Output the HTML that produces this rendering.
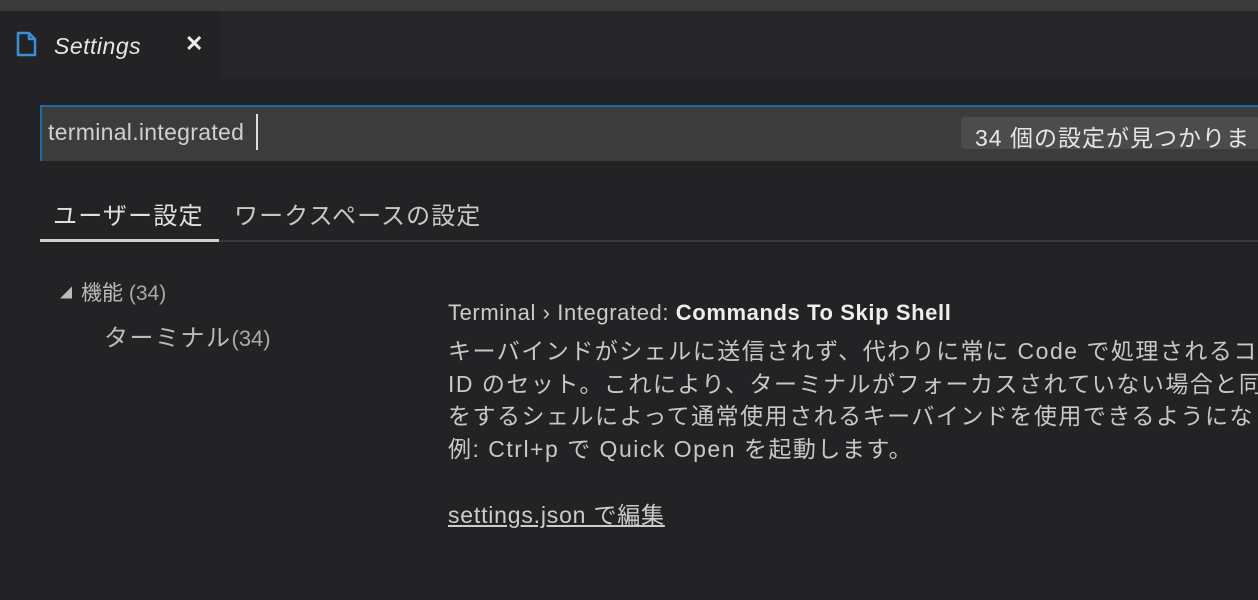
<!DOCTYPE html>
<html><head><meta charset="utf-8"><style>
body{margin:0;width:1258px;height:600px;overflow:hidden;background:#232225;font-family:"Liberation Sans","Noto Sans CJK JP",sans-serif;color:#ccc;position:relative}
.a{position:absolute;white-space:nowrap}
</style></head><body>
<div class="a" style="left:0;top:0;width:1258px;height:11px;background:#3a3a3b"></div>
<div class="a" style="left:0;top:11px;width:1258px;height:67px;background:#262628"></div>
<div class="a" style="left:0;top:11px;width:220px;height:67px;background:#232225"></div>
<svg class="a" style="left:16px;top:31px" width="22" height="26" viewBox="0 0 22 26"><path d="M2 2h11l6 6v16H2z M13 2v6h6" fill="none" stroke="#3b8fd6" stroke-width="2.5" stroke-linejoin="round"/></svg>
<div class="a" style="left:54px;top:33px;font-size:23px;font-style:italic;color:#e6e6e6;letter-spacing:0.5px">Settings</div>
<div class="a" style="left:185px;top:31px;font-size:22px;font-weight:bold;color:#eee">✕</div>
<div class="a" style="left:40px;top:105px;width:1218px;height:56px;background:#3c3c3c;border-top:2px solid #1f6aa5;box-sizing:border-box"></div>
<div class="a" style="left:40px;top:105px;width:2px;height:56px;background:#1f6aa5"></div>
<div class="a" style="left:48px;top:119px;font-size:23px;color:#d0d0d0;letter-spacing:0.3px">terminal.integrated</div>
<div class="a" style="left:256px;top:114px;width:2px;height:36px;background:#ddd"></div>
<div class="a" style="left:961px;top:117px;width:300px;height:32px;background:#4c4c4c;border-radius:4px"></div>
<div class="a" style="left:975px;top:119px;font-size:23px;color:#e6e6e6;letter-spacing:1px">34 個の設定が見つかりま</div>
<div class="a" style="left:53px;top:196px;font-size:24px;color:#e0e0e0;letter-spacing:1.2px">ユーザー設定</div>
<div class="a" style="left:234px;top:196px;font-size:24px;color:#c8c8c8;letter-spacing:1.1px">ワークスペースの設定</div>
<div class="a" style="left:40px;top:240px;width:1218px;height:2px;background:#3a3a3c"></div>
<div class="a" style="left:40px;top:239px;width:179px;height:3px;background:#d0d0d0"></div>
<div class="a" style="left:60px;top:284px;font-size:12px;color:#bbb">◢</div>
<div class="a" style="left:81px;top:277px;font-size:21px;color:#bbb">機能 <span style="color:#aaa">(34)</span></div>
<div class="a" style="left:104px;top:318px;font-size:24px;color:#bbb;letter-spacing:1.5px">ターミナル<span style="font-size:22px;color:#aaa;letter-spacing:0">(34)</span></div>
<div class="a" style="left:448px;top:300px;font-size:22px;color:#ccc;letter-spacing:0.6px">Terminal › Integrated: <b style="color:#eee">Commands To Skip Shell</b></div>
<div class="a" style="left:448px;top:335px;font-size:23px;line-height:32.5px;color:#c8c8c8;letter-spacing:1.5px">キーバインドがシェルに送信されず、代わりに常に Code で処理されるコ<br>ID のセット。これにより、ターミナルがフォーカスされていない場合と同<br>をするシェルによって通常使用されるキーバインドを使用できるようにな<br>例: Ctrl+p で Quick Open を起動します。</div>
<div class="a" style="left:448px;top:496px;font-size:23px;color:#ccc;text-decoration:underline;letter-spacing:0.8px">settings.json で編集</div>
</body></html>
